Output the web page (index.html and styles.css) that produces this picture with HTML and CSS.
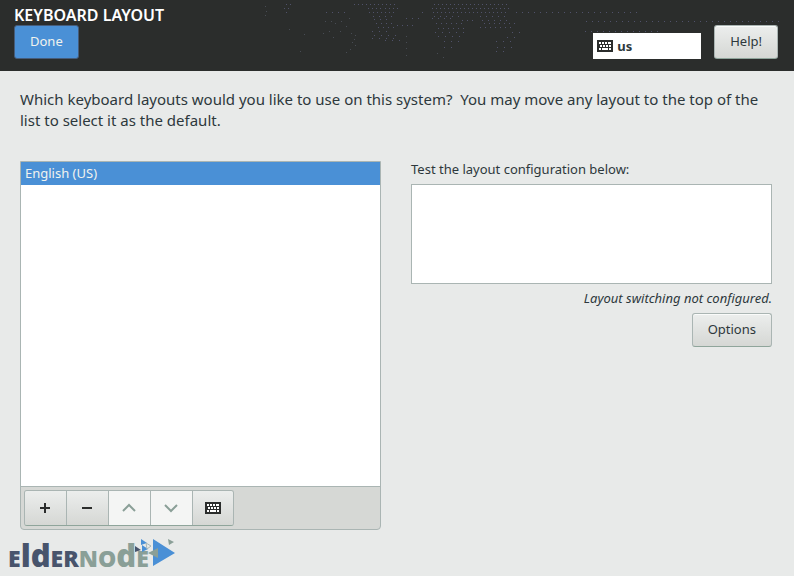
FILE: index.html
```html
<!DOCTYPE html>
<html lang="en">
<head>
<meta charset="utf-8">
<meta name="viewport" content="width=device-width, initial-scale=1">
<title>Keyboard Layout</title>
<link rel="stylesheet" href="styles.css">
</head>
<body>
<header class="topbar">
  <svg class="texture" width="560" height="60" viewBox="240 0 560 60" aria-hidden="true">
    <g fill="none" stroke="#50526a" stroke-width="1">
      <path stroke-dasharray="1 3" d="M354 4.500H397M434 4.500H508M286 4.500H292M385 8.500H398M432 8.500H510M284 8.500H290M368 8.500H384M369 12.500H395M433 12.500H507M286 12.500H288"/>
      <path stroke-dasharray="1 5" d="M326 12.500H346M422 12.500H424M516 12.500H640M373 16.500H394M434 16.500H464M480 16.500H506M586 21.500H782M374 19.500H390M482 20.500H510M406 18.500H420M585 31.500H658M432 18.500H456"/>
      <path stroke-dasharray="1 4" d="M376 23.500H396M436 23.500H466M484 23.500H516M378 27.500H398M438 28.500H464M480 27.500H512M397 25.500H414M462 20.500H476"/>
      <path stroke-dasharray="1 6" d="M372 31.500H388M435 32.500H464M512 32.500H520M374 35.500H400M438 36.500H462M372 38.500H395M507 37.500H520M444 41.500H462M496 41.500H516M385 40.500H400M444 47.500H458M497 47.500H514M496 51.500H504"/>
    </g>
    <path fill="#484c54" d="M265 6h1v1h-1zM266 11h1v1h-1zM265 15h1v1h-1zM289 29h1v1h-1zM304 34h1v1h-1zM325 21h1v1h-1zM331 21h1v1h-1zM335 23h1v1h-1zM341 21h1v1h-1zM346 26h1v1h-1zM349 18h1v1h-1zM323 33h1v1h-1zM329 31h1v1h-1zM333 37h1v1h-1zM340 31h1v1h-1zM351 33h1v1h-1zM355 35h1v1h-1zM354 39h1v1h-1zM352 42h1v1h-1zM355 45h1v1h-1zM350 49h1v1h-1zM346 52h1v1h-1zM300 51h1v1h-1zM406 36h1v1h-1zM406 42h1v1h-1zM406 48h1v1h-1zM406 55h1v1h-1zM443 57h1v1h-1zM437 53h1v1h-1z"/>
  </svg>
  <div class="heading">
    <h1 class="title">KEYBOARD LAYOUT</h1>
    <button class="button done" type="button">Done</button>
  </div>
  <div class="tools">
    <button class="indicator" type="button">
      <svg class="kbd" viewBox="0 0 16 12" aria-hidden="true"><use href="#keyboard"/></svg>
      us
    </button>
    <button class="button help" type="button">Help!</button>
  </div>
</header>

<main class="content">
  <p class="intro">Which keyboard layouts would you like to use on this system?&nbsp; You may move any layout to the top of the list to select it as the default.</p>
  <div class="columns">
    <section class="layouts" aria-label="Keyboard layouts">
      <ul class="list">
        <li class="row selected">English (US)</li>
      </ul>
      <div class="toolbar">
        <div class="group">
          <button class="tool" type="button" aria-label="Add layout"><svg viewBox="0 0 16 16"><path fill="none" stroke="#2b2d2c" stroke-width="2" d="M2 8H12M7 3V13"/></svg></button>
          <button class="tool" type="button" aria-label="Remove layout"><svg viewBox="0 0 16 16"><path fill="none" stroke="#2b2d2c" stroke-width="2" d="M2 8H12"/></svg></button>
          <button class="tool" type="button" aria-label="Move up" disabled><svg viewBox="0 0 16 16"><path fill="none" stroke="#8a9f97" stroke-width="2" d="M1 11L7 5L13 11"/></svg></button>
          <button class="tool" type="button" aria-label="Move down" disabled><svg viewBox="0 0 16 16"><path fill="none" stroke="#8a9f97" stroke-width="2" d="M1 5L7 11L13 5"/></svg></button>
          <button class="tool" type="button" aria-label="Preview layout"><svg class="kbd" viewBox="0 0 16 12"><use href="#keyboard"/></svg></button>
        </div>
      </div>
    </section>
    <section class="testing">
      <label class="label" for="test">Test the layout configuration below:</label>
      <textarea class="test" id="test"></textarea>
      <p class="status">Layout switching not configured.</p>
      <button class="button options" type="button">Options</button>
    </section>
  </div>
</main>

<footer class="brand">
  <span class="navy">E<span>ld</span>ER</span><span class="sage">NO<span>d</span>E</span>
  <svg class="arrows" width="42" height="30" viewBox="136 536 42 30" aria-hidden="true">
    <path fill="#4a90d6" d="M154 539L176 553L154 566zM142 539L148 543L142 545zM143 545L149 549L143 552z"/>
    <path fill="#8a9f97" d="M159 548V558L149 553zM169 539L175 542L170 545z"/>
    <path fill="#48546c" d="M136 546L142 550L136 552z"/>
    <path fill="none" stroke="#a9b7b7" d="M147 543L152 546L148 549z"/>
  </svg>
</footer>

<svg class="symbols" aria-hidden="true">
  <symbol id="keyboard" viewBox="0 0 16 12">
    <path fill="#2b2d2c" d="M0 0h16v12H0z"/>
    <path fill="#fff" d="M2 2h2v2H2zM5 2h2v2H5zM8 2h2v2H8zM11 2h3v2h-3zM3 5h2v2H3zM6 5h2v2H6zM9 5h2v2H9zM12 5h2v2h-2zM2 8h2v2H2zM5 8h6v2H5zM12 8h2v2h-2z"/>
  </symbol>
</svg>
</body>
</html>
```
FILE: styles.css
```css
* {
  box-sizing: border-box;
}

body {
  margin: 0;
  min-height: 100vh;
  display: flex;
  flex-direction: column;
  background: #e8eae9;
  color: #2d383c;
  font: 13px/20px "Noto Sans", "Open Sans", sans-serif;
}

button {
  font: inherit;
  color: inherit;
  cursor: pointer;
}

.topbar {
  position: relative;
  display: flex;
  justify-content: space-between;
  padding: 5px 16px 12px 14px;
  background: #2b2d2c;
}

.texture {
  position: absolute;
  top: 0;
  left: 240px;
}

.heading {
  display: flex;
  flex-direction: column;
  align-items: flex-start;
}

.title {
  margin: 0;
  color: #fff;
  font-size: 16px;
  font-weight: 600;
  line-height: 20px;
}

.button {
  height: 34px;
  padding: 0 15px 2px;
  border: 1px solid #aab5b3;
  border-bottom-color: #8fa59b;
  border-radius: 3px;
  background: linear-gradient(#eceeed, #d5d7d4);
  box-shadow: inset 0 1px #fafbfa;
}

.done {
  border-color: #465c7a;
  background: #4a90d6;
  box-shadow: none;
  color: #f1f3ee;
}

.tools {
  position: relative;
  display: flex;
  align-items: flex-end;
  gap: 13px;
}

.indicator {
  display: flex;
  align-items: center;
  gap: 4px;
  width: 108px;
  height: 26px;
  padding: 0 4px;
  border: 0;
  background: #fff;
  font-weight: 700;
}

.kbd {
  width: 16px;
  height: 12px;
}

.content {
  flex: 1;
  display: flex;
  flex-direction: column;
  padding: 18px 22px 0 20px;
}

.intro {
  margin: 0 0 30px;
  font-size: 15px;
  line-height: 21px;
}

.columns {
  flex: 1;
  display: grid;
  grid-template-columns: 1fr 1fr;
  gap: 30px;
}

.layouts {
  display: flex;
  flex-direction: column;
  border: 1px solid #aab5b3;
  border-radius: 0 0 4px 4px;
  background: #d6d8d5;
}

.list {
  flex: 1;
  margin: 0;
  padding: 0;
  list-style: none;
  background: #fff;
}

.row {
  padding: 1px 4px 2px;
}

.selected {
  background: #4a90d6;
  color: #f1f3ee;
}

.toolbar {
  padding: 3px;
  border-top: 1px solid #aab5b3;
}

.group {
  display: inline-flex;
  vertical-align: top;
  border: 1px solid #aab5b3;
  border-bottom-color: #8fa59b;
  border-radius: 3px;
  overflow: hidden;
}

.tool {
  display: flex;
  align-items: center;
  justify-content: center;
  width: 42px;
  height: 34px;
  padding: 0;
  border: 0;
  border-right: 1px solid #aab5b3;
  background: linear-gradient(#eceeed, #d5d7d4);
}

.tool:last-child {
  width: 40px;
  border-right: 0;
}

.tool:disabled {
  background: #f4f5f4;
  cursor: default;
}

.tool svg {
  width: 16px;
}

.testing {
  display: flex;
  flex-direction: column;
  align-items: flex-end;
}

.label {
  align-self: flex-start;
  margin-bottom: 7px;
  line-height: 16px;
}

.test {
  width: 100%;
  height: 100px;
  padding: 4px;
  border: 1px solid #aab5b3;
  background: #fff;
  font: inherit;
  resize: none;
}

.status {
  margin: 4px 0 5px;
  font-style: italic;
}

.brand {
  display: flex;
  align-items: flex-end;
  height: 46px;
  padding: 0 8px 3px;
  font: 900 23px/30px "Noto Sans", sans-serif;
}

.brand span span {
  font-size: 31px;
}

.navy {
  color: #48546c;
}

.sage {
  color: #8a9f97;
}

.arrows {
  align-self: flex-start;
  margin: 6px 0 0 -14px;
}

.symbols {
  position: absolute;
  width: 0;
  height: 0;
}
```
